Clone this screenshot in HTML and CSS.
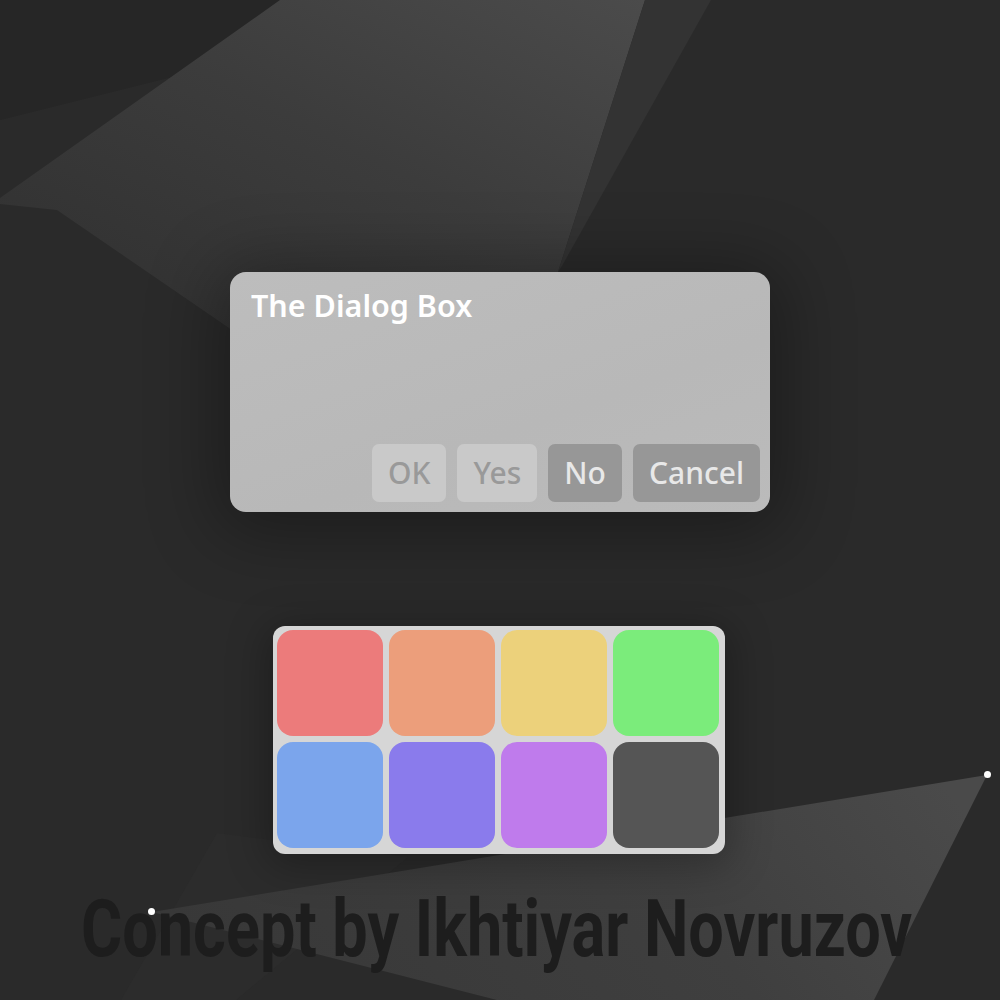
FILE: index.html
```html
<!DOCTYPE html>
<html lang="en">
<head>
<meta charset="utf-8">
<title>Dialog concept</title>
<link rel="stylesheet" href="styles.css">
</head>
<body>
<svg class="backdrop" width="1000" height="1000" viewBox="0 0 1000 1000" aria-hidden="true">
  <defs>
    <linearGradient id="gTop" x1="0" y1="1" x2="1" y2="0">
      <stop offset="0" stop-color="#2f2f2f"/>
      <stop offset="0.55" stop-color="#3c3c3c"/>
      <stop offset="1" stop-color="#4b4b4b"/>
    </linearGradient>
    <linearGradient id="gBottom" x1="0" y1="0.5" x2="1" y2="0.3">
      <stop offset="0" stop-color="#383838"/>
      <stop offset="0.6" stop-color="#3f3f3f"/>
      <stop offset="1" stop-color="#4a4a4a"/>
    </linearGradient>
  </defs>
  <polygon points="0,0 480,0 0,120" fill="#262626"/>
  <polygon points="280,0 645,0 558,272 232,330 57,210 0,204 0,198" fill="url(#gTop)"/>
  <polygon points="645,0 711,0 562,266 558,272" fill="#333333"/>
  <polygon points="121,1000 217,833 408,857 236,1000" fill="#2c2c2c"/>
  <polygon points="152,912 987,775 874,1000 497,1000" fill="url(#gBottom)"/>
</svg>

<main class="stage">
  <section class="dialog">
    <h1 class="dialog-title">The Dialog Box</h1>
    <div class="dialog-actions">
      <button class="btn btn-soft" type="button">OK</button>
      <button class="btn btn-soft" type="button">Yes</button>
      <button class="btn btn-strong" type="button">No</button>
      <button class="btn btn-strong" type="button">Cancel</button>
    </div>
  </section>

  <div class="palette">
    <span class="swatch swatch-red"></span>
    <span class="swatch swatch-orange"></span>
    <span class="swatch swatch-yellow"></span>
    <span class="swatch swatch-green"></span>
    <span class="swatch swatch-blue"></span>
    <span class="swatch swatch-indigo"></span>
    <span class="swatch swatch-violet"></span>
    <span class="swatch swatch-gray"></span>
  </div>

  <p class="credit"><span class="credit-text">Concept by Ikhtiyar Novruzov</span></p>
</main>

<span class="dot dot-left"></span>
<span class="dot dot-right"></span>
</body>
</html>
```

FILE: styles.css
```css
html, body {
  margin: 0;
  padding: 0;
}

body {
  width: 1000px;
  height: 1000px;
  overflow: hidden;
  position: relative;
  background: #2a2a2a;
  font-family: "Noto Sans", "DejaVu Sans", sans-serif;
}

.backdrop {
  position: absolute;
  left: 0;
  top: 0;
  display: block;
}

.stage {
  position: relative;
  display: flex;
  flex-direction: column;
  align-items: flex-start;
  padding-top: 272px;
}

.dialog {
  margin-left: 230px;
  width: 540px;
  height: 240px;
  box-sizing: border-box;
  padding: 13px 10px 10px 21px;
  border-radius: 16px;
  background: linear-gradient(160deg, #bdbdbd 0%, #b8b8b8 60%, #bbbbbb 100%);
  box-shadow: 0 8px 70px 14px rgba(0, 0, 0, 0.32);
  display: flex;
  flex-direction: column;
}

.dialog-title {
  margin: 0;
  font-size: 30.5px;
  line-height: 40px;
  font-weight: 600;
  color: #ffffff;
}

.dialog-actions {
  margin-top: auto;
  display: flex;
  justify-content: flex-end;
  gap: 11px;
}

.btn {
  height: 58px;
  padding: 0 16px;
  border: none;
  border-radius: 7px;
  font-family: "Noto Sans", "DejaVu Sans", sans-serif;
  font-size: 30px;
  font-weight: 500;
  line-height: 58px;
}

.btn-soft {
  background: #c9c9c9;
  color: #999999;
}

.btn-strong {
  background: #979797;
  color: #e8e8e8;
}

.palette {
  margin-top: 114px;
  margin-left: 273px;
  display: grid;
  grid-template-columns: repeat(4, 106px);
  grid-auto-rows: 106px;
  gap: 6px;
  padding: 4px 6px 6px 4px;
  background: #d6d6d6;
  border-radius: 12px;
  box-shadow: 0 6px 40px 6px rgba(0, 0, 0, 0.28);
}

.swatch {
  display: block;
  border-radius: 16px;
}

.swatch-red { background: #ec7b7b; }
.swatch-orange { background: #ec9e7b; }
.swatch-yellow { background: #ecd17b; }
.swatch-green { background: #7bec7b; }
.swatch-blue { background: #7ba5ec; }
.swatch-indigo { background: #8a7bec; }
.swatch-violet { background: #bf7bec; }
.swatch-gray { background: #555555; }

.credit {
  margin: 49px 0 0 81px;
  font-family: Roboto, "Liberation Sans", sans-serif;
  font-weight: 700;
  font-size: 63px;
  line-height: 64px;
  color: #1d1d1d;
  white-space: nowrap;
}

.credit-text {
  display: inline-block;
  transform: scaleY(1.27);
  transform-origin: 0 54px;
}

.dot {
  position: absolute;
  width: 7px;
  height: 7px;
  border-radius: 50%;
  background: #ffffff;
}

.dot-left {
  left: 148px;
  top: 908px;
}

.dot-right {
  left: 984px;
  top: 771px;
}
```
